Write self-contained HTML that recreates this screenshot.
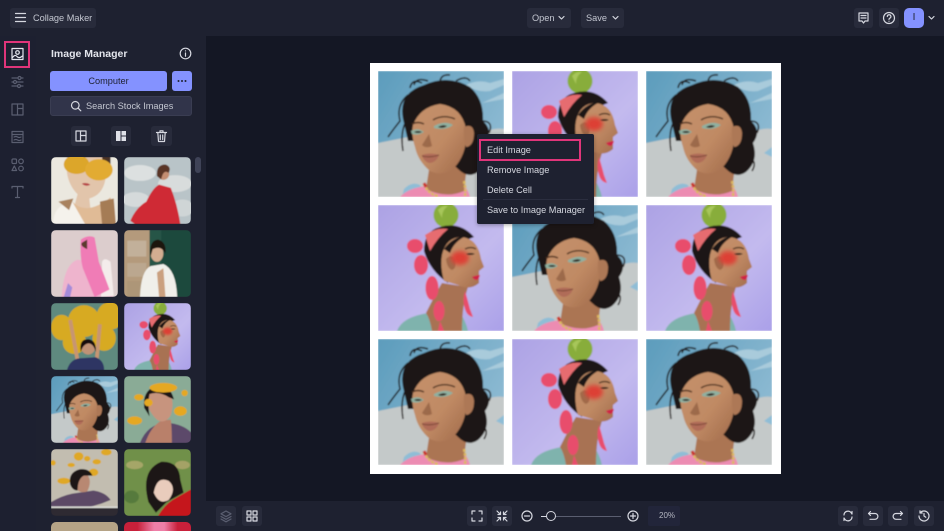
<!DOCTYPE html>
<html><head><meta charset="utf-8"><style>
*{box-sizing:border-box}
html,body{margin:0;padding:0;width:944px;height:531px;overflow:hidden}
body{background:#141724;font-family:"Liberation Sans",sans-serif;color:#d6d8e0;font-size:9.2px}
#root{position:absolute;left:0;top:0;width:944px;height:531px;overflow:hidden;background:#141724}
.a{position:absolute}
.btn{position:absolute;background:#282b3b;border-radius:3px}
.txt{position:absolute;white-space:nowrap;line-height:12px;margin-top:1px}
.t{position:absolute;width:67px;height:67px;border-radius:5px;overflow:hidden}
.t svg,.c svg{display:block;width:100%;height:100%}
.c{position:absolute;width:126px;height:126px;overflow:hidden}
svg.i{position:absolute;fill:none;stroke:#d6d8e0;stroke-width:1.2;stroke-linecap:round;stroke-linejoin:round}
svg.d{stroke:#5a5e70}
</style></head><body><div id="root">

<svg width="0" height="0" style="position:absolute"><defs>
<filter id="b" x="-5%" y="-5%" width="110%" height="110%"><feGaussianBlur stdDeviation="0.8"/></filter>
<filter id="b2" x="-40%" y="-40%" width="180%" height="180%"><feGaussianBlur stdDeviation="2.2"/></filter>
<linearGradient id="sky" x1="0" y1="0" x2="1" y2="0.6"><stop offset="0" stop-color="#5c9cbc"/><stop offset="1" stop-color="#8fbbd3"/></linearGradient>
<linearGradient id="lav" x1="0" y1="0" x2="1" y2="1"><stop offset="0" stop-color="#aca2e4"/><stop offset=".6" stop-color="#c3baee"/><stop offset="1" stop-color="#aaa0e8"/></linearGradient>
<linearGradient id="skin" x1="0" y1="0" x2="1" y2="1"><stop offset="0" stop-color="#c4906a"/><stop offset=".55" stop-color="#c08a64"/><stop offset="1" stop-color="#a06a4a"/></linearGradient>

<symbol id="A" viewBox="0 0 126 126"><g filter="url(#b)">
<rect width="126" height="126" fill="url(#sky)"/>
<path d="M88 14q12-6 24-2l14-4v6l-14 6q-12 2-24-6zM104 32l22-10v6z" fill="#a9cbdb"/>
<path d="M0 72Q30 66 50 62L100 66Q112 56 126 58V126H0Z" fill="#c4c9c9"/>
<path d="M26 118q8-8 16-4l4 12H24zM118 82l8-6v10z" fill="#8fbdd6"/>
<path d="M22 126Q30 117 48 115L86 115Q90 118 92 126Z" fill="#ec8cb2"/>
<path d="M52 92L90 86L86 120Q68 128 48 118Z" fill="#ab7553"/>
<path d="M46 113Q50 123 60 125M86 110Q88 118 87 125" fill="none" stroke="#dcb85e" stroke-width="2.600" stroke-dasharray="3 1"/>
<path d="M46 112l2 4" stroke="#c9302c" stroke-width="3"/>
<path d="M25 48Q20 22 46 14Q70 3 92 16Q106 28 105 50Q116 60 107 72Q113 90 100 101Q90 108 80 98L50 70L30 70Z" fill="#1f1614"/>
<path d="M36 14Q38 6 50 10M62 12Q62 3 72 4M30 24Q18 34 22 50Q14 60 10 66M28 50Q22 62 25 80M104 50Q116 50 111 62M102 86Q112 90 106 100M44 12Q34 7 32 17M78 10Q88 4 92 10" fill="none" stroke="#1f1614" stroke-width="1.500"/>
<path d="M35 54Q42 36 62 33Q84 36 88 58Q90 82 76 97Q64 106 52 100Q40 90 37 76Q33 64 35 54Z" fill="url(#skin)"/>
<path d="M86 56q9-4 10 6q0 13-8 14q-3-8-2-20z" fill="#ad7856"/>
<path d="M33 60q7-4 13 1q-6 4-12 2zM56 55q11-6 19-1q-8 6-19 3z" fill="#8fb0a0"/>
<path d="M36 61q4-2 8 0q-4 2-8 0zM60 56q5-3 9-1q-4 3-9 1z" fill="#2a1b14"/>
<path d="M34 53q6-3 12 0M55 49q10-6 22-1" fill="none" stroke="#4a2d1f" stroke-width="1.400"/>
<path d="M44 74q4 4 10 1q-2-8-3-12" fill="#845438" opacity=".6"/>
<path d="M44 84q8-3 17 0q-3 8-10 8q-6-2-7-8z" fill="#b06c58"/>
<path d="M44 85q8 2 17-1" fill="none" stroke="#6a3a2c" stroke-width=".8"/>
</g></symbol>

<symbol id="B" viewBox="0 0 126 126"><g filter="url(#b)">
<rect width="126" height="126" fill="url(#lav)"/>
<circle cx="68" cy="10" r="12.500" fill="#88ad3a"/><path d="M60 5q4-5 10-4q-6 4-6 12z" fill="#a7c65a"/>
<path d="M19 126Q24 112 50 108L80 104Q88 116 90 126Z" fill="#7fb3ad"/>
<path d="M48 108Q60 84 64 78L90 82Q84 100 84 126L54 126Q52 114 48 108Z" fill="#a87252"/>
<path d="M46 46Q46 26 62 22Q82 16 96 32L86 36Q72 36 68 50L70 78Q52 66 46 46Z" fill="#1e1614"/>
<path d="M47 30Q58 22 70 24Q60 32 52 46Z" fill="#e66c70"/>
<path d="M64 50Q68 32 84 32Q100 34 103 54L106 62L101 66L101 78Q92 86 80 80L66 76Q62 62 64 50Z" fill="url(#skin)"/>
<path d="M68 54q6-6 9 1q2 8-3 10q-5-2-6-11z" fill="#a06a4a"/>
<path d="M66 44Q74 32 90 30Q76 36 72 48Z" fill="#1e1614"/>
<ellipse cx="82" cy="53" rx="9" ry="7" fill="#dd3f36" filter="url(#b2)"/>
<path d="M88 49q5-2 9 0q-5 2-9 0z" fill="#2a1b14"/>
<path d="M87 44q6-3 11 0" fill="none" stroke="#3a2418" stroke-width="1.200"/>
<path d="M94 72q5-2 8-2q-1 4-3 5q-3 0-5-3z" fill="#cf2246"/>
<g fill="#e84d6c">
<ellipse cx="37" cy="41" rx="8" ry="7"/><ellipse cx="43" cy="60" rx="7" ry="10"/><ellipse cx="54" cy="83" rx="6.500" ry="12"/><ellipse cx="61" cy="106" rx="5.500" ry="10"/>
<path d="M87 86q3 10 5 18l3 8q-6-1-8-8q-3-8 0-18z"/>
<path d="M62 116l4 10h-6z"/>
</g>
</g></symbol>

<symbol id="t1" viewBox="0 0 126 126"><g filter="url(#b)">
<rect width="126" height="126" fill="#ebe8df"/>
<path d="M30 0H102V44Q96 72 72 78L74 96Q60 106 44 92L50 70Q34 54 30 30Z" fill="#e2c5ab"/>
<path d="M96 0h16v28l-12 8z" fill="#4a3226"/>
<path d="M4 126Q4 90 40 84L66 126Z" fill="#f5f2ec"/>
<path d="M40 84Q66 112 112 76L120 126H64Z" fill="#e0bb96"/>
<path d="M92 84L118 78L122 126H96Z" fill="#a57b55"/>
<path d="M14 84L42 78L34 100Z" fill="#a9825e"/>
<ellipse cx="48" cy="14" rx="24" ry="18" fill="#dca62c"/><ellipse cx="90" cy="24" rx="26" ry="20" fill="#e2ab32"/>
<path d="M58 50q9-3 16 2q-8 5-16-2z" fill="#b84a4a"/>
</g></symbol>

<symbol id="t2" viewBox="0 0 126 126"><g filter="url(#b)">
<rect width="126" height="126" fill="#b9c4c8"/>
<ellipse cx="30" cy="30" rx="30" ry="15" fill="#dce0e0"/><ellipse cx="96" cy="50" rx="32" ry="16" fill="#d8dcdc"/><ellipse cx="22" cy="80" rx="26" ry="14" fill="#d5dadb"/><ellipse cx="110" cy="96" rx="22" ry="16" fill="#cfd5d6"/>
<path d="M12 120Q22 96 42 84Q54 58 66 52L88 58Q100 88 106 126H20Z" fill="#cf2b35"/>
<circle cx="74" cy="32" r="11" fill="#c48e72"/><path d="M62 36Q60 14 78 14Q90 18 84 30Q74 22 70 42Z" fill="#5a3526"/>
</g></symbol>

<symbol id="t3" viewBox="0 0 126 126"><g filter="url(#b)">
<rect width="126" height="126" fill="#dccdcd"/>
<path d="M20 126Q24 64 50 56L80 60Q110 70 116 126Z" fill="#eeb4cd"/>
<path d="M118 124L112 60Q100 50 96 60L94 126Z" fill="#f4eceb"/>
<path d="M56 18Q70 8 82 14L90 60Q102 90 110 112L82 126L60 72Q54 50 56 18Z" fill="#f07bb6"/>
<path d="M68 36Q54 30 58 24L68 18Z" fill="#5b3a2f"/>
<path d="M24 126l8-26l8 8l-4 18z" fill="#a48bd9"/>
</g></symbol>

<symbol id="t4" viewBox="0 0 126 126"><g filter="url(#b)">
<rect width="126" height="126" fill="#1f4a3e"/>
<rect width="48" height="126" fill="#b49a7c"/>
<rect x="6" y="20" width="36" height="30" fill="#c2b09a"/><rect x="6" y="62" width="36" height="26" fill="#bba78f"/><rect x="6" y="96" width="36" height="30" fill="#ad9678"/>
<path d="M48 0H70V126H48z" fill="#2c5f50" opacity=".5"/>
<path d="M30 126Q32 76 50 68L74 64Q98 74 100 126Z" fill="#f0efea"/>
<path d="M62 80L74 72L78 126H66Z" fill="#caa07f"/>
<ellipse cx="62" cy="44" rx="12" ry="16" fill="#d3ad91"/><path d="M50 50Q46 20 64 18Q80 22 78 44Q70 28 54 36Z" fill="#1b1311"/>
</g></symbol>

<symbol id="t5" viewBox="0 0 126 126"><g filter="url(#b)">
<rect width="126" height="126" fill="#5e8a7f"/>
<g fill="#d7aa22"><ellipse cx="62" cy="34" rx="30" ry="30"/><ellipse cx="112" cy="24" rx="26" ry="26"/><ellipse cx="20" cy="46" rx="20" ry="24"/><ellipse cx="100" cy="66" rx="22" ry="24"/><ellipse cx="44" cy="74" rx="22" ry="22"/></g>
<path d="M36 32L50 108M92 40L86 106" stroke="#c79572" stroke-width="7" fill="none"/>
<path d="M30 126Q36 106 54 104L84 102Q100 108 100 126Z" fill="#2d3664"/>
<circle cx="70" cy="84" r="13" fill="#c09276"/><path d="M56 92Q52 68 70 68Q86 70 84 92Q80 76 70 76Q60 78 56 92Z" fill="#161010"/>
</g></symbol>

<symbol id="t6" viewBox="0 0 126 126"><g filter="url(#b)">
<rect width="126" height="126" fill="#8aab96"/>
<path d="M30 126Q44 90 80 88Q110 90 126 106V126Z" fill="#5c4a6a"/>
<path d="M70 84Q50 96 40 126L90 126Q90 96 88 82Z" fill="#b9806b"/>
<path d="M40 44Q50 20 78 24Q98 40 88 74Q76 92 62 82Q48 70 40 44Z" fill="#c7947e"/>
<path d="M38 60Q34 28 60 18Q86 14 94 44L84 40Q66 28 48 34Q44 50 48 76Z" fill="#1d1715"/>
<g fill="#e5a823"><ellipse cx="74" cy="22" rx="26" ry="9"/><ellipse cx="28" cy="40" rx="9" ry="6"/><ellipse cx="46" cy="50" rx="8" ry="7"/><ellipse cx="20" cy="84" rx="14" ry="8"/><ellipse cx="106" cy="66" rx="12" ry="9"/><ellipse cx="114" cy="32" rx="6" ry="6"/></g>
</g></symbol>

<symbol id="t7" viewBox="0 0 126 126"><g filter="url(#b)">
<rect width="126" height="126" fill="#c2bdb0"/>
<g fill="#dfa826"><ellipse cx="104" cy="6" rx="10" ry="6"/><ellipse cx="52" cy="14" rx="9" ry="8"/><ellipse cx="68" cy="18" rx="6" ry="5"/><ellipse cx="86" cy="24" rx="8" ry="5"/><ellipse cx="38" cy="30" rx="7" ry="4"/><ellipse cx="4" cy="26" rx="5" ry="5"/><ellipse cx="80" cy="44" rx="9" ry="7"/><ellipse cx="24" cy="60" rx="12" ry="6"/></g>
<path d="M0 100Q20 88 40 84L80 78Q104 82 112 96Q80 110 50 112L0 108Z" fill="#5b4a66"/>
<path d="M44 66Q48 44 68 48Q78 60 68 80Q50 86 44 66Z" fill="#b88872"/>
<path d="M36 66Q32 44 54 38Q72 36 78 50L62 50Q50 56 50 78Q40 78 36 66Z" fill="#1c1614"/>
<rect y="108" width="126" height="3" fill="#dcdcd8"/><rect y="111" width="126" height="15" fill="#2e2a32"/>
</g></symbol>

<symbol id="t8" viewBox="0 0 126 126"><g filter="url(#b)">
<rect width="126" height="126" fill="#6f9048"/>
<ellipse cx="20" cy="30" rx="16" ry="8" fill="#a5a668"/><ellipse cx="14" cy="90" rx="14" ry="12" fill="#577a3c"/><ellipse cx="110" cy="30" rx="14" ry="8" fill="#a4a266"/>
<path d="M46 100Q30 40 70 24Q104 22 106 58L112 82L80 100L60 120Z" fill="#1c1413"/>
<path d="M56 82Q62 50 84 60Q100 74 84 96Q66 106 56 82Z" fill="#e9ccbc"/>
<path d="M64 126Q78 102 98 92L126 76V126Z" fill="#c5161f"/>
</g></symbol>
</defs></svg>

<!-- panels -->
<div class="a" style="left:0;top:0;width:944px;height:36px;background:#1e2130"></div>
<div class="a" style="left:0;top:36px;width:36px;height:495px;background:#1d2030"></div>
<div class="a" style="left:36px;top:36px;width:170px;height:495px;background:#1e2130"></div>
<div class="a" style="left:206px;top:501px;width:738px;height:30px;background:#1e2130"></div>

<!-- top bar -->
<div class="btn" style="left:10px;top:8px;width:86px;height:20px"></div>
<svg class="i" style="left:14px;top:11px" width="13" height="13" viewBox="0 0 13 13"><path d="M1.500 2.500h10M1.500 6.500h10M1.500 10.500h10"/></svg>
<div class="txt" style="left:33px;top:11px;color:#c3c6d0">Collage Maker</div>
<div class="btn" style="left:527px;top:8px;width:44px;height:20px"></div>
<div class="txt" style="left:532px;top:11px;color:#c3c6d0">Open</div>
<svg class="i" style="left:558px;top:15px" width="7" height="6" viewBox="0 0 7 6"><path d="M1 1.500l2.500 2.500 2.500-2.500"/></svg>
<div class="btn" style="left:581px;top:8px;width:43px;height:20px"></div>
<div class="txt" style="left:586px;top:11px;color:#c3c6d0">Save</div>
<svg class="i" style="left:612px;top:15px" width="7" height="6" viewBox="0 0 7 6"><path d="M1 1.500l2.500 2.500 2.500-2.500"/></svg>
<div class="btn" style="left:854px;top:8px;width:19px;height:20px"></div>
<svg class="i" style="left:857px;top:11px" width="13" height="14" viewBox="0 0 13 14"><path d="M2 2h9v8H8l-1.500 2L5 10H2zM4 4.500h5M4 7h5"/></svg>
<div class="btn" style="left:879px;top:8px;width:20px;height:20px"></div>
<svg class="i" style="left:882px;top:11px" width="14" height="14" viewBox="0 0 14 14"><circle cx="7" cy="7" r="5.500"/><path d="M5.300 5.500a1.800 1.800 0 1 1 2.500 1.700c-.6.300-.8.600-.8 1.200M7 10.200v.1"/></svg>
<div class="a" style="left:904px;top:8px;width:20px;height:20px;border-radius:5px;background:#8492ff;color:#1e2130;text-align:center;line-height:20px;font-size:10px">I</div>
<svg class="i" style="left:928px;top:15px" width="7" height="6" viewBox="0 0 7 6"><path d="M1 1.500l2.500 2.500 2.500-2.500"/></svg>

<!-- rail -->
<div class="a" style="left:4px;top:41px;width:26px;height:27px;border:2px solid #e0357a"></div>
<svg class="i" style="left:11px;top:47px;stroke:#e4e6ee" width="13" height="14" viewBox="0 0 13 14"><rect x="1" y="1.500" width="11" height="11"/><circle cx="6.500" cy="5.500" r="1.800"/><path d="M1.500 10.500Q4 7 6 9.500T11.500 9"/></svg>
<svg class="i d" style="left:11px;top:75px" width="13" height="14" viewBox="0 0 13 14"><path d="M1 3h11M1 7h11M1 11h11"/><circle cx="8.500" cy="3" r="1.500" fill="#1d2030"/><circle cx="4" cy="7" r="1.500" fill="#1d2030"/><circle cx="8" cy="11" r="1.500" fill="#1d2030"/></svg>
<svg class="i d" style="left:11px;top:103px" width="13" height="13" viewBox="0 0 13 13"><rect x="1" y="1" width="11" height="11"/><path d="M6.500 1v11M6.500 5.500H12"/></svg>
<svg class="i d" style="left:11px;top:130px" width="13" height="14" viewBox="0 0 13 14"><rect x="1" y="1.500" width="11" height="11"/><path d="M1 4.500h11M3 7q2-1 3.500 0t3.500 0M3 10q2-1 3.500 0t3.500 0"/></svg>
<svg class="i d" style="left:11px;top:158px" width="13" height="14" viewBox="0 0 13 14"><rect x="1" y="1" width="4.500" height="4.500" rx="1"/><circle cx="10" cy="3.300" r="2.300"/><path d="M3.300 8l2.300 4.500H1z"/><circle cx="10" cy="10.500" r="2.300"/></svg>
<svg class="i d" style="left:11px;top:185px" width="13" height="14" viewBox="0 0 13 14"><path d="M1 3V1.500h11V3M6.500 1.500v11M4.500 12.500h4"/></svg>

<!-- panel header -->
<div class="txt" style="left:51px;top:47px;font-size:10.500px;font-weight:bold;color:#e3e5ec">Image Manager</div>
<svg class="i" style="left:179px;top:47px" width="13" height="13" viewBox="0 0 13 13"><circle cx="6.500" cy="6.500" r="5.300"/><path d="M6.500 6v3.200M6.500 3.800v.1"/></svg>
<div class="a" style="left:50px;top:71px;width:117px;height:20px;border-radius:3px;background:#8492ff;color:#1e2130;text-align:center;line-height:21px">Computer</div>
<div class="a" style="left:172px;top:71px;width:20px;height:20px;border-radius:3px;background:#8492ff"></div>
<svg class="a" style="left:177px;top:79px" width="10" height="4" viewBox="0 0 10 4"><g fill="#1e2130"><circle cx="1.500" cy="2" r="1"/><circle cx="5" cy="2" r="1"/><circle cx="8.500" cy="2" r="1"/></g></svg>
<div class="a" style="left:50px;top:96px;width:142px;height:20px;border-radius:3px;background:#31344a;border:1px solid #3a3d52"></div>
<svg class="i" style="left:70px;top:100px" width="12" height="12" viewBox="0 0 12 12"><circle cx="5.300" cy="5.300" r="3.800"/><path d="M8.200 8.200l2.600 2.600"/></svg>
<div class="txt" style="left:86px;top:99px;color:#c3c6d0">Search Stock Images</div>
<div class="btn" style="left:71px;top:126px;width:20px;height:20px"></div>
<svg class="i" style="left:75px;top:130px" width="12" height="12" viewBox="0 0 12 12"><rect x="1" y="1" width="10" height="10"/><path d="M5.500 1v10M5.500 5.500H11"/></svg>
<div class="btn" style="left:111px;top:126px;width:20px;height:20px"></div>
<svg class="a" style="left:115px;top:130px" width="12" height="12" viewBox="0 0 12 12"><g fill="#dfe1e8"><rect x="1" y="1" width="4.500" height="10"/><rect x="6.500" y="1" width="4.500" height="4.500"/><rect x="6.500" y="6.500" width="4.500" height="4.500"/></g></svg>
<div class="btn" style="left:151px;top:126px;width:21px;height:20px"></div>
<svg class="i" style="left:155px;top:129px" width="13" height="14" viewBox="0 0 13 14"><path d="M1.500 3.500h10M5 3.500V1.800h3v1.700M2.800 3.500l.7 9h6l.7-9M5.300 6v4.500M7.700 6v4.500"/></svg>
<div class="a" style="left:195px;top:157px;width:6px;height:16px;border-radius:3px;background:#3f4357"></div>

<!-- thumbs -->
<div class="t" style="left:51px;top:157px"><svg viewBox="0 0 126 126"><use href="#t1" width="126" height="126"/></svg></div>
<div class="t" style="left:124px;top:157px"><svg viewBox="0 0 126 126"><use href="#t2" width="126" height="126"/></svg></div>
<div class="t" style="left:51px;top:230px"><svg viewBox="0 0 126 126"><use href="#t3" width="126" height="126"/></svg></div>
<div class="t" style="left:124px;top:230px"><svg viewBox="0 0 126 126"><use href="#t4" width="126" height="126"/></svg></div>
<div class="t" style="left:51px;top:303px"><svg viewBox="0 0 126 126"><use href="#t5" width="126" height="126"/></svg></div>
<div class="t" style="left:124px;top:303px"><svg viewBox="0 0 126 126"><use href="#B" width="126" height="126"/></svg></div>
<div class="t" style="left:51px;top:376px"><svg viewBox="0 0 126 126"><use href="#A" width="126" height="126"/></svg></div>
<div class="t" style="left:124px;top:376px"><svg viewBox="0 0 126 126"><use href="#t6" width="126" height="126"/></svg></div>
<div class="t" style="left:51px;top:449px"><svg viewBox="0 0 126 126"><use href="#t7" width="126" height="126"/></svg></div>
<div class="t" style="left:124px;top:449px"><svg viewBox="0 0 126 126"><use href="#t8" width="126" height="126"/></svg></div>
<div class="a" style="left:51px;top:522px;width:67px;height:9px;border-radius:5px 5px 0 0;background:#b5a386"></div>
<div class="a" style="left:124px;top:522px;width:67px;height:9px;border-radius:5px 5px 0 0;background:linear-gradient(90deg,#c8203a 20%,#ee7fa8 45%,#ee7fa8 60%,#c8203a 80%)"></div>

<!-- canvas -->
<div class="a" style="left:370px;top:63px;width:411px;height:411px;background:#fff"></div>
<div class="c" style="left:378px;top:71px"><svg viewBox="0 0 126 126"><use href="#A" width="126" height="126"/></svg></div>
<div class="c" style="left:512px;top:71px"><svg viewBox="0 0 126 126"><use href="#B" width="126" height="126"/></svg></div>
<div class="c" style="left:646px;top:71px"><svg viewBox="0 0 126 126"><use href="#A" width="126" height="126"/></svg></div>
<div class="c" style="left:378px;top:205px"><svg viewBox="0 0 126 126"><use href="#B" width="126" height="126"/></svg></div>
<div class="c" style="left:512px;top:205px"><svg viewBox="0 0 126 126"><use href="#A" width="126" height="126"/></svg></div>
<div class="c" style="left:646px;top:205px"><svg viewBox="0 0 126 126"><use href="#B" width="126" height="126"/></svg></div>
<div class="c" style="left:378px;top:339px"><svg viewBox="0 0 126 126"><use href="#A" width="126" height="126"/></svg></div>
<div class="c" style="left:512px;top:339px"><svg viewBox="0 0 126 126"><use href="#B" width="126" height="126"/></svg></div>
<div class="c" style="left:646px;top:339px"><svg viewBox="0 0 126 126"><use href="#A" width="126" height="126"/></svg></div>

<!-- context menu -->
<div class="a" style="left:477px;top:134px;width:117px;height:90px;background:#1e2130;border-radius:2px;box-shadow:0 1px 4px rgba(0,0,0,.35)"></div>
<div class="a" style="left:479px;top:139px;width:102px;height:22px;border:2px solid #e0357a"></div>
<div class="txt" style="left:487px;top:143px;color:#d6d8e0">Edit Image</div>
<div class="txt" style="left:487px;top:163px;color:#d6d8e0">Remove Image</div>
<div class="txt" style="left:487px;top:183px;color:#d6d8e0">Delete Cell</div>
<div class="txt" style="left:487px;top:203px;color:#d6d8e0">Save to Image Manager</div>
<div class="a" style="left:483px;top:199px;width:105px;height:1px;background:#2b2e3f"></div>

<!-- bottom bar -->
<div class="btn" style="left:216px;top:506px;width:20px;height:20px"></div>
<svg class="i d" style="left:220px;top:510px" width="12" height="13" viewBox="0 0 12 13"><path d="M6 1l5 2.800-5 2.800L1 3.800zM1 6.500l5 2.800 5-2.800M1 9l5 2.800L11 9"/></svg>
<div class="btn" style="left:242px;top:506px;width:20px;height:20px"></div>
<svg class="i" style="left:246px;top:510px" width="12" height="12" viewBox="0 0 12 12"><rect x="1" y="1" width="4" height="4"/><rect x="7" y="1" width="4" height="4"/><rect x="1" y="7" width="4" height="4"/><rect x="7" y="7" width="4" height="4"/></svg>
<div class="btn" style="left:467px;top:506px;width:20px;height:20px"></div>
<svg class="i" style="left:471px;top:510px" width="12" height="12" viewBox="0 0 12 12"><path d="M1 4V1h3M8 1h3v3M11 8v3H8M4 11H1V8"/></svg>
<div class="btn" style="left:492px;top:506px;width:20px;height:20px"></div>
<svg class="i" style="left:496px;top:510px" width="12" height="12" viewBox="0 0 12 12"><path d="M11 1L7.500 4.500M7.500 2v2.500H10M1 1l3.500 3.500M4.500 2v2.500H2M1 11l3.500-3.500M4.500 10V7.500H2M11 11L7.500 7.500M7.500 10V7.500H10"/></svg>
<svg class="i" style="left:521px;top:510px" width="12" height="12" viewBox="0 0 12 12"><circle cx="6" cy="6" r="5"/><path d="M3.500 6h5"/></svg>
<div class="a" style="left:541px;top:516px;width:80px;height:1px;background:#5a5e70"></div>
<div class="a" style="left:541px;top:516px;width:6px;height:1px;background:#d6d8e0"></div>
<div class="a" style="left:546px;top:511px;width:10px;height:10px;border-radius:50%;border:1.200px solid #d6d8e0;background:#1e2130"></div>
<svg class="i" style="left:627px;top:510px" width="12" height="12" viewBox="0 0 12 12"><circle cx="6" cy="6" r="5"/><path d="M3.500 6h5M6 3.500v5"/></svg>
<div class="a" style="left:648px;top:506px;width:32px;height:20px;background:#22253a;border-radius:2px"></div>
<div class="txt" style="left:659px;top:509px;font-size:8px;color:#b4b7c2">20%</div>
<div class="btn" style="left:838px;top:506px;width:20px;height:20px"></div>
<svg class="i" style="left:842px;top:510px" width="12" height="12" viewBox="0 0 12 12"><path d="M2 5a4 4 0 0 1 7-2.500L10 4V1.500M10 7a4 4 0 0 1-7 2.500L2 8v2.500"/></svg>
<div class="btn" style="left:863px;top:506px;width:20px;height:20px"></div>
<svg class="i" style="left:867px;top:510px" width="12" height="12" viewBox="0 0 12 12"><path d="M3.500 1.500L1.500 3.500l2 2M1.500 3.500H8a2.800 2.800 0 0 1 0 5.800H3"/></svg>
<div class="btn" style="left:888px;top:506px;width:20px;height:20px"></div>
<svg class="i" style="left:892px;top:510px" width="12" height="12" viewBox="0 0 12 12"><path d="M8.500 1.500l2 2-2 2M10.500 3.500H4a2.800 2.800 0 0 0 0 5.800h5"/></svg>
<div class="btn" style="left:914px;top:506px;width:20px;height:20px"></div>
<svg class="i" style="left:918px;top:510px" width="12" height="12" viewBox="0 0 12 12"><path d="M2 3a5 5 0 1 1-1 3M2 .800V3h2.200M6 3.500V6l1.800 1.200"/></svg>
</div></body></html>
